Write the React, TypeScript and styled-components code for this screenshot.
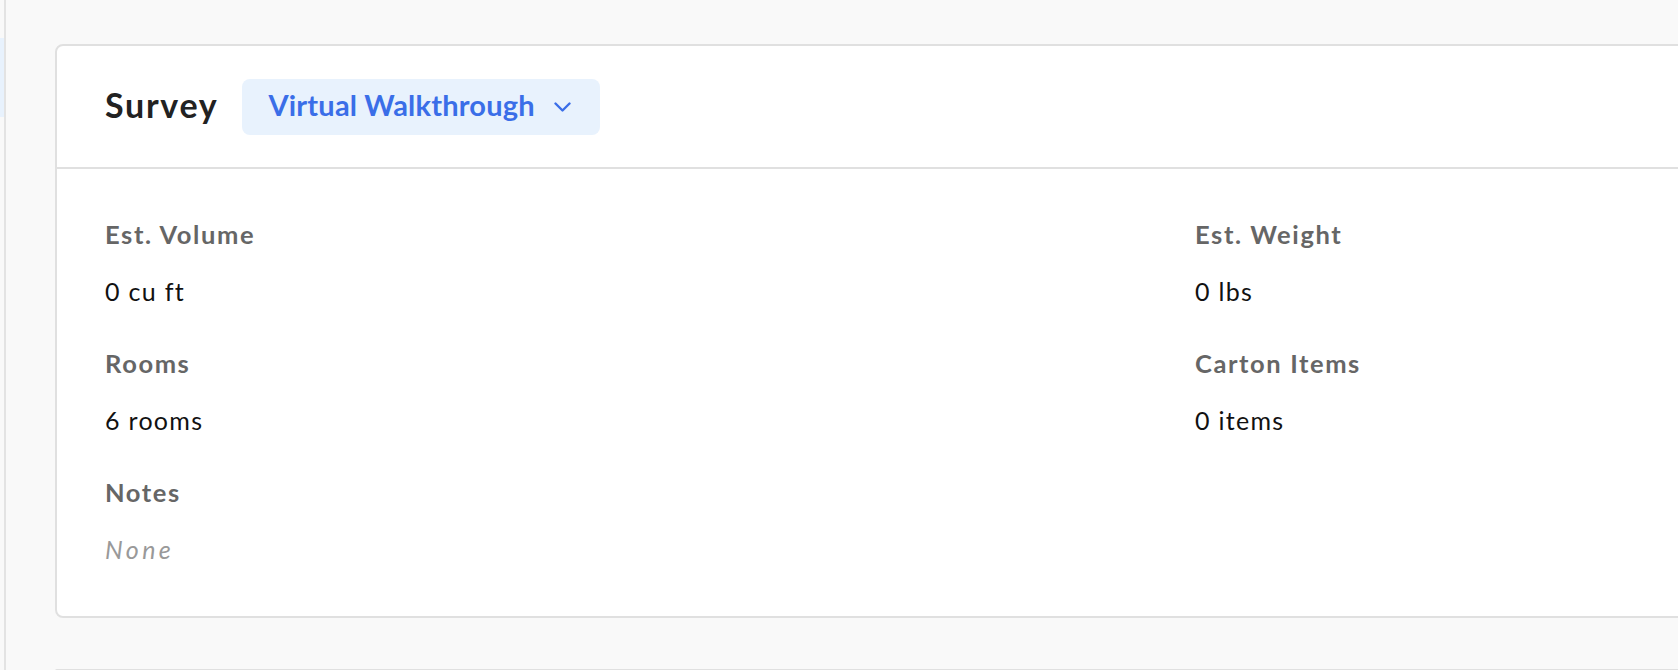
import React from 'react'
import styled, { createGlobalStyle } from 'styled-components'

const GlobalStyle = createGlobalStyle`
  html, body {
    margin: 0;
    padding: 0;
    background: #f9f9f9;
    overflow: hidden;
    font-family: Lato, "Open Sans", Arial, sans-serif;
  }
`

const Page = styled.div`
  display: flex;
  width: 1678px;
  height: 670px;
  overflow: hidden;
`

const Sidebar = styled.div`
  flex: 0 0 4px;
  padding-top: 38px;
  border-right: 2px solid #e3e3e3;
`

const SidebarItem = styled.div`
  height: 79px;
  background: #e8f2fd;
`

const Main = styled.main`
  flex: 1;
  padding: 44px 0 0 49px;
  display: flex;
  flex-direction: column;
  gap: 51px;
`

const Card = styled.section`
  width: 1800px;
  background: #fff;
  border: 2px solid #e0e0e0;
  border-radius: 8px;
  flex-shrink: 0;
`

const CardHeader = styled.header`
  display: flex;
  align-items: center;
  gap: 24px;
  height: 121px;
  padding: 0 48px;
  border-bottom: 2px solid #e0e0e0;
`

const Title = styled.h2`
  margin: 0;
  padding-bottom: 5px;
  font-size: 34px;
  font-weight: 700;
  color: #222;
  letter-spacing: 1.7px;
`

const TypeSelect = styled.button`
  display: flex;
  align-items: center;
  gap: 19px;
  height: 56px;
  padding: 0 29px 4px 26px;
  border: 0;
  border-radius: 8px;
  background: #e8f2fd;
  color: #3a6ee8;
  font-family: inherit;
  font-size: 29px;
  font-weight: 700;
  letter-spacing: 0.2px;
  cursor: pointer;
`

const Chevron = styled.svg`
  width: 17px;
  height: 10px;
  margin-top: 4px;
  fill: none;
  stroke: #3a6ee8;
  stroke-width: 2.4px;
  stroke-linecap: round;
  stroke-linejoin: round;
`

const CardBody = styled.div`
  display: grid;
  grid-template-columns: 1090px 1fr;
  row-gap: 38px;
  padding: 48px 48px 50px;
`

const Field = styled.div<{ $wide?: boolean }>`
  display: flex;
  flex-direction: column;
  gap: 23px;
  ${p => p.$wide ? 'grid-column: 1 / -1;' : ''}
`

const Label = styled.div`
  font-size: 25.5px;
  line-height: 34px;
  font-weight: 700;
  color: #666;
  letter-spacing: 1.6px;
`

const Value = styled.div<{ $empty?: boolean }>`
  font-size: 25px;
  line-height: 34px;
  letter-spacing: ${p => p.$empty ? '3.4px' : '1.3px'};
  color: ${p => p.$empty ? '#999' : '#111'};
  font-style: ${p => p.$empty ? 'italic' : 'normal'};
`

const fields = [
  { label: 'Est. Volume', value: '0 cu ft' },
  { label: 'Est. Weight', value: '0 lbs' },
  { label: 'Rooms', value: '6 rooms' },
  { label: 'Carton Items', value: '0 items' },
]

export default function App() {
  return (
    <Page>
      <GlobalStyle />
      <Sidebar>
        <SidebarItem />
      </Sidebar>
      <Main>
        <Card>
          <CardHeader>
            <Title>Survey</Title>
            <TypeSelect>
              Virtual Walkthrough
              <Chevron viewBox="0 0 17 10">
                <polyline points="1.5 1.5 8.5 8.5 15.5 1.5" />
              </Chevron>
            </TypeSelect>
          </CardHeader>
          <CardBody>
            {fields.map(f => (
              <Field key={f.label}>
                <Label>{f.label}</Label>
                <Value>{f.value}</Value>
              </Field>
            ))}
            <Field $wide>
              <Label>Notes</Label>
              <Value $empty>None</Value>
            </Field>
          </CardBody>
        </Card>
        <Card />
      </Main>
    </Page>
  )
}
